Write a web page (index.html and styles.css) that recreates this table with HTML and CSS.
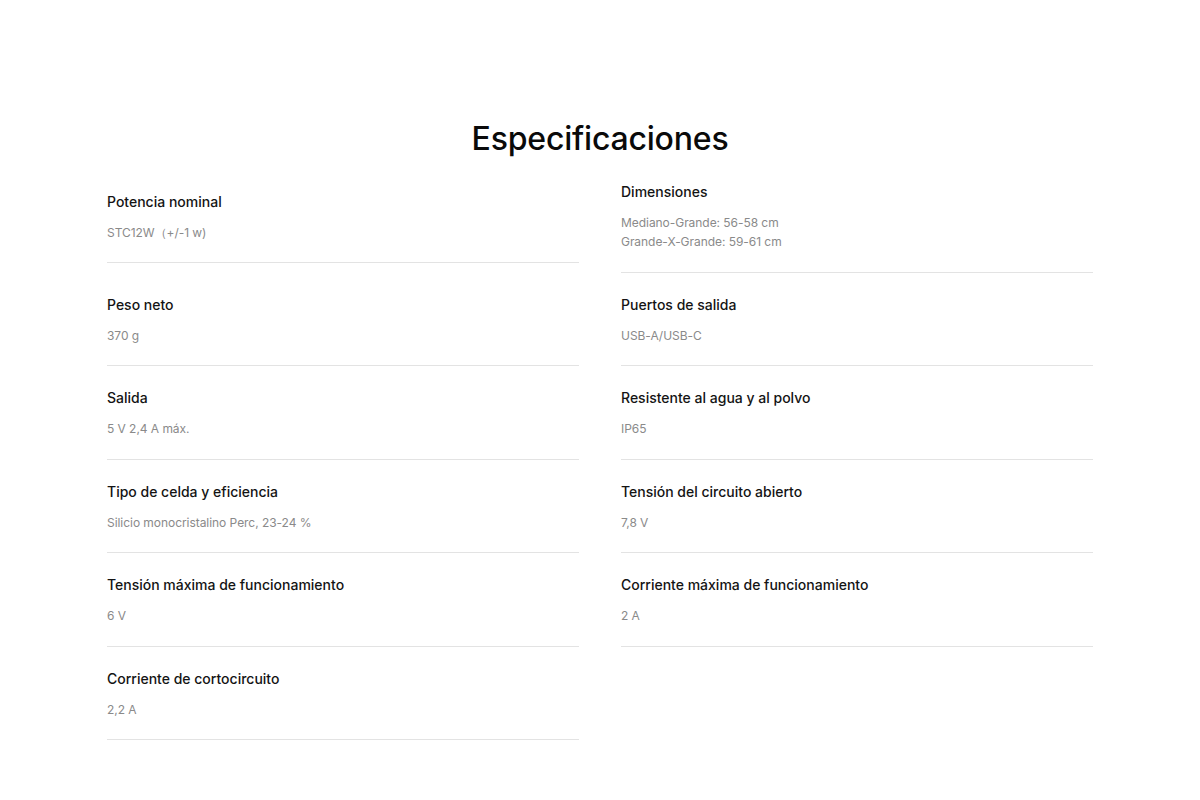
FILE: index.html
```html
<!DOCTYPE html>
<html lang="es">
<head>
<meta charset="utf-8">
<title>Especificaciones</title>
<link rel="stylesheet" href="styles.css">
</head>
<body>
<section class="specs">
  <h2 class="specs-title">Especificaciones</h2>
  <div class="specs-grid">
    <div class="spec"><div class="spec-name">Potencia nominal</div><div class="spec-value">STC12W（+/-1 w)</div></div>
    <div class="spec"><div class="spec-name">Dimensiones</div><div class="spec-value">Mediano-Grande: 56-58 cm<br>Grande-X-Grande: 59-61 cm</div></div>
    <div class="spec"><div class="spec-name">Peso neto</div><div class="spec-value">370 g</div></div>
    <div class="spec"><div class="spec-name">Puertos de salida</div><div class="spec-value">USB-A/USB-C</div></div>
    <div class="spec"><div class="spec-name">Salida</div><div class="spec-value">5 V 2,4 A máx.</div></div>
    <div class="spec"><div class="spec-name">Resistente al agua y al polvo</div><div class="spec-value">IP65</div></div>
    <div class="spec"><div class="spec-name">Tipo de celda y eficiencia</div><div class="spec-value">Silicio monocristalino Perc, 23-24 %</div></div>
    <div class="spec"><div class="spec-name">Tensión del circuito abierto</div><div class="spec-value">7,8 V</div></div>
    <div class="spec"><div class="spec-name">Tensión máxima de funcionamiento</div><div class="spec-value">6 V</div></div>
    <div class="spec"><div class="spec-name">Corriente máxima de funcionamiento</div><div class="spec-value">2 A</div></div>
    <div class="spec"><div class="spec-name">Corriente de cortocircuito</div><div class="spec-value">2,2 A</div></div>
  </div>
</section>
</body>
</html>
```

FILE: styles.css
```css
* { box-sizing: border-box; }
html, body { margin: 0; padding: 0; background: #fff; }
body {
  font-family: Inter, "Noto Sans", "Liberation Sans", sans-serif;
  color: #111;
}
.specs {
  width: 986px;
  margin: 0 auto;
  padding-top: 119px;
}
.specs-title {
  margin: 0;
  text-align: center;
  font-size: 32px;
  line-height: 40px;
  font-weight: 500;
  color: #0a0a0a;
  letter-spacing: -0.2px;
}
.specs-grid {
  margin-top: 1px;
  display: grid;
  grid-template-columns: 472px 472px;
  column-gap: 42px;
  align-items: center;
}
.spec {
  padding: 20px 0 20.5px;
  border-bottom: 1px solid #e3e3e3;
}
.spec-name {
  font-size: 14px;
  line-height: 24px;
  font-weight: 500;
  color: #141414;
}
.spec-value {
  margin-top: 9px;
  font-size: 12px;
  line-height: 19px;
  color: #8a8a8a;
  letter-spacing: -0.05px;
}
```
